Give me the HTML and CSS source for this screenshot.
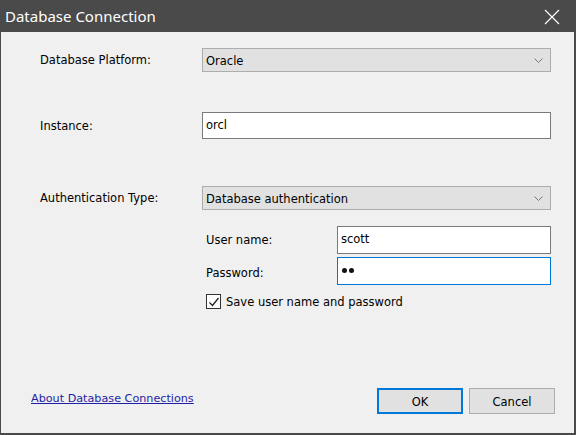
FILE: index.html
```html
<!DOCTYPE html>
<html>
<head>
<meta charset="utf-8">
<title>Database Connection</title>
<link rel="stylesheet" href="styles.css">
</head>
<body>
<div class="window">
  <div class="titlebar">
    <span class="title">Database Connection</span>
    <svg class="close" width="16" height="16" viewBox="0 0 16 16"><path d="M1 1L15 15M15 1L1 15" stroke="#fff" stroke-width="1.2" fill="none"/></svg>
  </div>
  <div class="content">
    <div class="form">
      <div class="row">
        <div class="label">Database Platform:</div>
        <div class="select">
          <span>Oracle</span>
          <svg class="chev" width="9" height="5" viewBox="0 0 9 5"><path d="M0.5 0.5L4.5 4.5L8.5 0.5" stroke="#777" stroke-width="1" fill="none"/></svg>
        </div>
      </div>
      <div class="row row-instance">
        <div class="label">Instance:</div>
        <div class="input tall">orcl</div>
      </div>
      <div class="row row-auth">
        <div class="label">Authentication Type:</div>
        <div class="select">
          <span>Database authentication</span>
          <svg class="chev" width="9" height="5" viewBox="0 0 9 5"><path d="M0.5 0.5L4.5 4.5L8.5 0.5" stroke="#777" stroke-width="1" fill="none"/></svg>
        </div>
      </div>
      <div class="sub">
        <div class="subgrid">
          <div class="sublabel">User name:</div>
          <div class="input">scott</div>
          <div class="sublabel low">Password:</div>
          <div class="input focused"><span class="dot"></span><span class="dot"></span></div>
        </div>
        <div class="check-row">
          <span class="checkbox"><svg width="12" height="12" viewBox="0 0 12 12"><path d="M1.5 6.5L4.5 9.5L10.5 2" stroke="#222" stroke-width="1.3" fill="none"/></svg></span>
          <span>Save user name and password</span>
        </div>
      </div>
    </div>
    <div class="footer">
      <a class="link" href="#">About Database Connections</a>
      <div class="buttons">
        <div class="btn primary">OK</div>
        <div class="btn">Cancel</div>
      </div>
    </div>
  </div>
</div>
</body>
</html>
```

FILE: styles.css
```css
html, body {
  margin: 0;
  padding: 0;
  background: #f0f0f0;
}
.window {
  width: 576px;
  height: 435px;
  box-sizing: border-box;
  background: #4a4a4a;
  padding: 0 2px 2px 1px;
  display: flex;
  flex-direction: column;
  font-family: "DejaVu Sans", Verdana, sans-serif;
  font-size: 11.5px;
  color: #000;
}
.titlebar {
  height: 32px;
  flex: none;
  display: flex;
  align-items: center;
  justify-content: space-between;
  padding: 0 14px 0 4px;
}
.title {
  color: #fff;
  font-family: "Noto Sans", "Open Sans", sans-serif;
  font-size: 15px;
}
.close {
  display: block;
  margin-top: 1px;
}
.content {
  flex: 1;
  background: #f0f0f0;
  display: flex;
  flex-direction: column;
}
.form {
  padding: 16px 23px 0 39px;
}
.row {
  display: flex;
  align-items: center;
}
.row-instance {
  margin-top: 40px;
}
.row-auth {
  margin-top: 47px;
}
.label {
  width: 162px;
  flex: none;
}
.select {
  flex: 1;
  height: 24px;
  box-sizing: border-box;
  border: 1px solid #adadad;
  background: #e1e1e1;
  display: flex;
  align-items: center;
  justify-content: space-between;
  padding: 1px 7px 0 3px;
}
.chev {
  display: block;
}
.input {
  height: 28px;
  box-sizing: border-box;
  border: 1px solid #7a7a7a;
  background: #fff;
  display: flex;
  align-items: center;
  padding: 0 3px 2px 3px;
  flex: 1;
}
.input.tall {
  height: 27px;
}
.input.focused {
  border-color: #0078d7;
  gap: 2px;
  padding-left: 4px;
}
.dot {
  width: 5px;
  height: 5px;
  border-radius: 50%;
  background: #111;
}
.sub {
  margin: 16px 0 0 166px;
}
.subgrid {
  display: grid;
  grid-template-columns: 131px 1fr;
  row-gap: 3px;
  align-items: center;
}
.sublabel.low {
  padding-top: 3px;
}
.check-row {
  margin-top: 9px;
  display: flex;
  align-items: center;
  gap: 5px;
}
.checkbox {
  width: 15px;
  height: 15px;
  box-sizing: border-box;
  border: 1px solid #333;
  background: #fff;
  display: flex;
  align-items: center;
  justify-content: center;
}
.checkbox svg {
  display: block;
}
.footer {
  margin-top: auto;
  display: flex;
  align-items: center;
  justify-content: space-between;
  padding: 0 19px 19px 30px;
}
.link {
  color: #1f1fa6;
  text-decoration: underline;
  font-size: 11.2px;
  margin-bottom: 5px;
}
.buttons {
  display: flex;
  gap: 6px;
}
.btn {
  width: 86px;
  height: 26px;
  box-sizing: border-box;
  border: 1px solid #adadad;
  background: #e1e1e1;
  display: flex;
  align-items: center;
  justify-content: center;
  padding-top: 2px;
}
.btn.primary {
  border: 2px solid #0078d7;
}
```
